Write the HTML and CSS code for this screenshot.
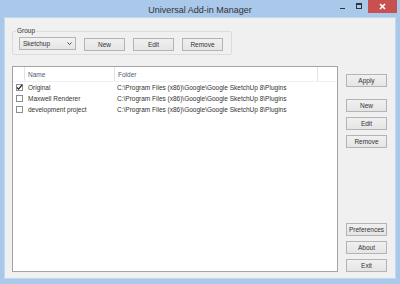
FILE: index.html
```html
<!DOCTYPE html>
<html lang="en">
<head>
    <meta charset="UTF-8">
    <title>Universal Add-in Manager</title>
    <link rel="stylesheet" href="styles.css">
</head>
<body>
    <div class="window">
        <div class="titlebar">
            <span></span>
            <span class="title">Universal Add-in Manager</span>
            <div class="controls">
                <span class="ctl-min"></span>
                <span class="ctl-max"></span>
                <span class="ctl-close">
                    <svg width="7" height="7" viewBox="0 0 7 7"><path d="M1 1L6 6M6 1L1 6" stroke="#fff" stroke-width="1.6"/></svg>
                </span>
            </div>
        </div>

        <div class="client">
            <fieldset class="group">
                <legend>Group</legend>
                <div class="group-row">
                    <div class="combo">
                        <span>Sketchup</span>
                        <svg width="5" height="3" viewBox="0 0 5 3"><path d="M0.5 0.5L2.5 2.5L4.5 0.5" stroke="#444" fill="none"/></svg>
                    </div>
                    <button class="btn">New</button>
                    <button class="btn">Edit</button>
                    <button class="btn">Remove</button>
                </div>
            </fieldset>

            <div class="main">
                <div class="list">
                    <div class="list-head">
                        <div class="col"></div>
                        <div class="col name">Name</div>
                        <div class="col folder">Folder</div>
                        <div class="col last"></div>
                    </div>
                    <div class="row">
                        <div class="cell"><span class="check on"><svg width="7" height="7" viewBox="0 0 7 7"><path d="M1 3.5L2.6 5.2L6 1" stroke="#222" stroke-width="1.2" fill="none"/></svg></span></div>
                        <div class="cell name">Original</div>
                        <div class="cell folder">C:\Program Files (x86)\Google\Google SketchUp 8\Plugins</div>
                    </div>
                    <div class="row">
                        <div class="cell"><span class="check"></span></div>
                        <div class="cell name">Maxwell Renderer</div>
                        <div class="cell folder">C:\Program Files (x86)\Google\Google SketchUp 8\Plugins</div>
                    </div>
                    <div class="row">
                        <div class="cell"><span class="check"></span></div>
                        <div class="cell name">development project</div>
                        <div class="cell folder">C:\Program Files (x86)\Google\Google SketchUp 8\Plugins</div>
                    </div>
                </div>

                <div class="side">
                    <button class="btn">Apply</button>
                    <button class="btn gap-top">New</button>
                    <button class="btn">Edit</button>
                    <button class="btn">Remove</button>
                    <button class="btn push">Preferences</button>
                    <button class="btn">About</button>
                    <button class="btn">Exit</button>
                </div>
            </div>
        </div>
    </div>
</body>
</html>
```

FILE: styles.css
```css
/* Windows 8 style dialog */
:root {
    --frame: #aac8ea;
    --client: #f0f0f0;
    --btn-border: #b4b4b4;
    --line: #e3e3e3;
    --text: #333333;
}

body {
    margin: 0;
    width: 400px;
    height: 284px;
    background-color: var(--frame);
    font-family: "Liberation Sans", Arial, sans-serif;
    font-size: 6.5px;
    color: var(--text);
    overflow: hidden;
}

.window {
    display: flex;
    flex-direction: column;
    height: 284px;
}

.titlebar {
    display: grid;
    grid-template-columns: 1fr auto 1fr;
    align-items: center;
    height: 18px;
}

.title {
    font-size: 9px;
    color: #333333;
    padding-top: 2px;
}

.controls {
    justify-self: end;
    align-self: start;
    display: flex;
    align-items: flex-start;
    margin-right: 3px;
}

.ctl-min {
    width: 5px;
    height: 1px;
    background-color: #333;
    margin: 8px 11px 0 0;
}

.ctl-max {
    width: 4px;
    height: 3px;
    border: 1px solid #333;
    border-top-width: 2px;
    margin: 3px 6px 0 0;
}

.ctl-close {
    width: 29px;
    height: 13px;
    background-color: #c75050;
    display: flex;
    align-items: center;
    justify-content: center;
}

.client {
    margin: 0 5px;
    height: 260px;
    box-sizing: border-box;
    background-color: var(--client);
    outline: 1px solid #c2d8f1;
    padding: 9px 8px 6px 7px;
    display: flex;
    flex-direction: column;
}

.group {
    width: 220px;
    box-sizing: border-box;
    margin: 0;
    padding: 0 6px 3px 6px;
    border: 1px solid #dcdcdc;
    border-radius: 2px;
}

.group legend {
    padding: 0 1px;
    margin-left: -3px;
    line-height: 8px;
    color: var(--text);
}

.group-row {
    display: flex;
    gap: 8px;
    padding-top: 2px;
}

.combo {
    width: 57px;
    height: 13px;
    box-sizing: border-box;
    border: 1px solid var(--btn-border);
    background: linear-gradient(#f2f2f2, #e5e5e5);
    display: flex;
    align-items: center;
    justify-content: space-between;
    padding: 0 3px 0 3px;
}

.btn {
    width: 41px;
    height: 13px;
    box-sizing: border-box;
    border: 1px solid var(--btn-border);
    background: linear-gradient(#f0f0f0, #e5e5e5);
    font-family: inherit;
    font-size: 6.5px;
    color: var(--text);
    padding: 0;
    margin: 0;
    margin-top: 1px;
}

.main {
    display: flex;
    gap: 8px;
    margin-top: 11px;
    flex: 1;
}

.list {
    width: 326px;
    box-sizing: border-box;
    border: 1px solid #a3a3a3;
    background-color: #ffffff;
}

.list-head,
.row {
    display: grid;
    grid-template-columns: 12px 90px 203px 1fr;
}

.list-head {
    height: 14px;
    border-bottom: 1px solid #eef2f8;
    color: #4c607a;
}

.col {
    border-right: 1px solid var(--line);
    display: flex;
    align-items: center;
    padding-left: 3px;
}

.col.last {
    border-right: none;
}

.row {
    height: 11px;
    align-items: center;
}

.cell.name {
    padding-left: 3px;
}

.cell.folder {
    padding-left: 2px;
    white-space: nowrap;
}

.check {
    display: block;
    width: 7px;
    height: 7px;
    box-sizing: border-box;
    border: 1px solid #8e8e8e;
    margin-left: 3px;
    background-color: #fff;
    position: relative;
}

.check svg {
    position: absolute;
    left: -1px;
    top: -1px;
}

.side {
    display: flex;
    flex-direction: column;
    gap: 5px;
    padding-top: 8px;
}

.side .btn {
    margin-top: 0;
}

.side .gap-top {
    margin-top: 7px;
}

.side .push {
    margin-top: auto;
}
```
